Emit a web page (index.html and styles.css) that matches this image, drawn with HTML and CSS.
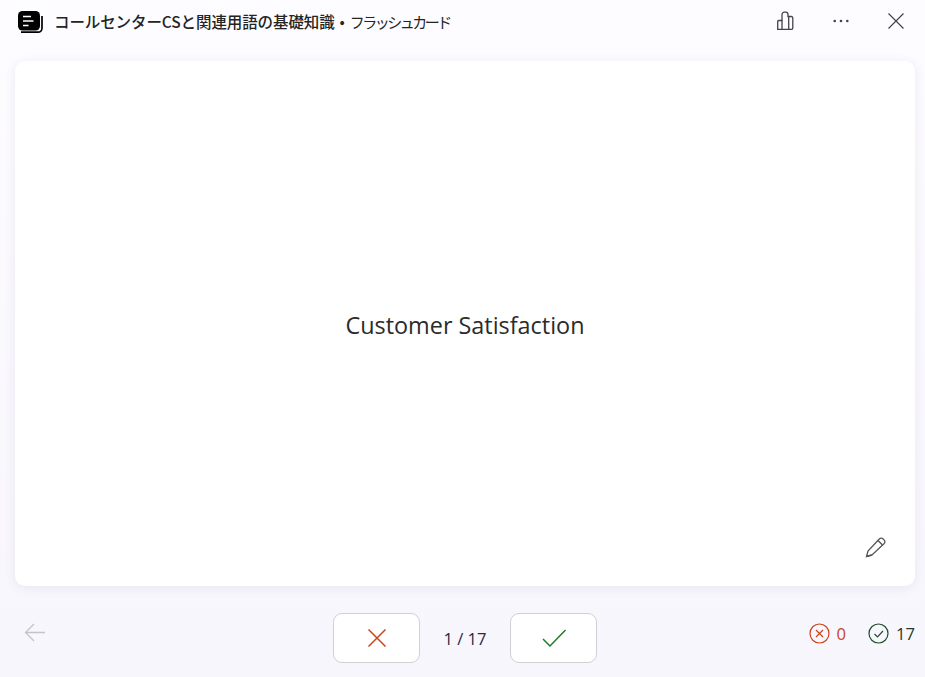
FILE: index.html
```html
<!DOCTYPE html>
<html lang="ja">
<head>
    <meta charset="UTF-8">
    <title>フラッシュカード</title>
    <link rel="stylesheet" href="styles.css">
</head>
<body>
    <!-- Titelleiste -->
    <header class="top-bar">
        <svg class="set-icon" width="27" height="24" viewBox="0 0 27 24">
            <path d="M4 22.200h17a4 4 0 0 0 4-4V6" fill="none" stroke="#000" stroke-width="1.700"/>
            <rect x="1" y="1" width="22" height="19.500" rx="4.500" fill="#000"/>
            <path d="M6 6.500h8M6 11h10.500M6 15.500h5.500" stroke="#fff" stroke-width="1.700"/>
        </svg>
        <h1 class="title"><strong>コールセンターCSと関連用語の基礎知識</strong><span class="dot">•</span><span class="kind">フラッシュカード</span></h1>
        <div class="top-actions">
            <svg width="20" height="20" viewBox="0 0 20 20" fill="none" stroke="#444" stroke-width="1.300">
                <path d="M1.700 18.300V10.500a1 1 0 0 1 1-1h3.300V3.500a2.300 2.300 0 0 1 2.300-2.300h1.400a2.300 2.300 0 0 1 2.300 2.300V5.500h3.300a1.500 1.500 0 0 1 1.500 1.500v10a1.300 1.300 0 0 1-1.300 1.300z"/>
                <path d="M6 9.500V18.300M12.700 5.500V18.300"/>
            </svg>
            <svg width="20" height="20" viewBox="0 0 20 20" fill="#444">
                <circle cx="3.700" cy="10" r="1.300"/><circle cx="10" cy="10" r="1.300"/><circle cx="16.300" cy="10" r="1.300"/>
            </svg>
            <svg width="20" height="20" viewBox="0 0 20 20" fill="none" stroke="#444" stroke-width="1.200">
                <path d="M2.500 2.500l15 15M17.500 2.500l-15 15"/>
            </svg>
        </div>
    </header>

    <!-- Karte -->
    <main class="card">
        <p class="term">Customer Satisfaction</p>
        <button class="edit-button" title="編集">
            <svg width="24" height="24" viewBox="0 0 24 24" fill="none" stroke="#555" stroke-width="1.300">
                <path d="M2.500 21.500l1.500-5.500L15.500 3.800a2.400 2.400 0 0 1 3.400 0l1.300 1.300a2.400 2.400 0 0 1 0 3.400L8 20z"/>
                <path d="M14 5.500l4.500 4.500M2.500 21.500L8 20"/>
            </svg>
        </button>
    </main>

    <!-- Fußleiste -->
    <footer class="bottom-bar">
        <svg class="back-arrow" width="22" height="19" viewBox="0 0 22 19" fill="none" stroke="#c4c4c8" stroke-width="1.300">
            <path d="M1.500 9.500h19.500M10 1L1.500 9.500 10 18"/>
        </svg>
        <div class="answer-group">
            <button class="answer-button">
                <svg width="20" height="20" viewBox="0 0 20 20" fill="none" stroke="#c8451b" stroke-width="1.500">
                    <path d="M1.500 1.500l17 17M18.500 1.500l-17 17"/>
                </svg>
            </button>
            <span class="progress">1 / 17</span>
            <button class="answer-button">
                <svg width="26" height="20" viewBox="0 0 26 20" fill="none" stroke="#1f7a26" stroke-width="1.500">
                    <path d="M2 11l7 7L24.500 2"/>
                </svg>
            </button>
        </div>
        <div class="score">
            <span class="score-item wrong">
                <svg width="21" height="21" viewBox="0 0 21 21" fill="none" stroke="currentColor" stroke-width="1.200">
                    <circle cx="10.500" cy="10.500" r="9.500"/><path d="M7 7l7 7M14 7l-7 7"/>
                </svg>0</span>
            <span class="score-item right">
                <svg width="21" height="21" viewBox="0 0 21 21" fill="none" stroke="#1d4f2a" stroke-width="1.200">
                    <circle cx="10.500" cy="10.500" r="9.500"/><path d="M6.500 11l3 3 5.500-6"/>
                </svg>17</span>
        </div>
    </footer>
</body>
</html>
```

FILE: styles.css
```css
* {
    box-sizing: border-box;
}

body {
    margin: 0;
    width: 925px;
    height: 677px;
    overflow: hidden;
    display: flex;
    flex-direction: column;
    background: linear-gradient(#fdfcff, #f8f6fd);
    color: #242424;
    font-family: "Open Sans", "Noto Sans CJK JP", sans-serif;
}

.top-bar {
    height: 61px;
    flex: none;
    display: flex;
    align-items: flex-start;
    padding: 10px 19px 0 17px;
}

.set-icon {
    flex: none;
}

.title {
    margin: -1px 0 0 10px;
    font-family: "Noto Sans CJK JP", sans-serif;
    font-size: 15.500px;
    font-weight: 400;
    line-height: 24px;
    letter-spacing: -0.100px;
    white-space: nowrap;
}

.title strong {
    font-weight: 500;
}

.title .dot {
    margin: 0 5px;
}

.title .kind {
    font-size: 15px;
    letter-spacing: -2.500px;
}

.top-actions {
    margin-left: auto;
    display: flex;
    gap: 35px;
    padding-top: 1px;
}

.card {
    height: 525px;
    flex: none;
    margin: 0 10px 0 15px;
    background: white;
    border-radius: 10px;
    box-shadow: 0 2px 12px rgba(60, 50, 110, 0.09);
    display: flex;
    align-items: center;
    justify-content: center;
    position: relative;
}

.term {
    margin: 3px 0 0;
    font-size: 23.400px;
    color: #2b2b2b;
}

.edit-button {
    position: absolute;
    right: 27px;
    bottom: 27px;
    padding: 0;
    display: flex;
    border: none;
    background: none;
}

.bottom-bar {
    flex: 1;
    position: relative;
    display: flex;
    align-items: flex-start;
    justify-content: center;
    padding: 27px 0 0 5px;
}

.back-arrow {
    position: absolute;
    left: 24px;
    top: 37px;
}

.answer-group {
    display: flex;
    align-items: center;
}

.answer-button {
    width: 87px;
    height: 50px;
    padding: 0;
    display: flex;
    align-items: center;
    justify-content: center;
    background: white;
    border: 1px solid #d2d0d3;
    border-radius: 9px;
}

.progress {
    width: 90px;
    text-align: center;
    font-size: 16.600px;
    color: #2a2a3a;
}

.score {
    position: absolute;
    right: 10px;
    top: 36px;
    display: flex;
    gap: 22px;
    font-size: 16.600px;
}

.score-item {
    display: flex;
    align-items: center;
    gap: 7px;
}

.score-item.wrong {
    color: #c8451b;
}

.score-item.right {
    color: #1d3a2a;
}
```
